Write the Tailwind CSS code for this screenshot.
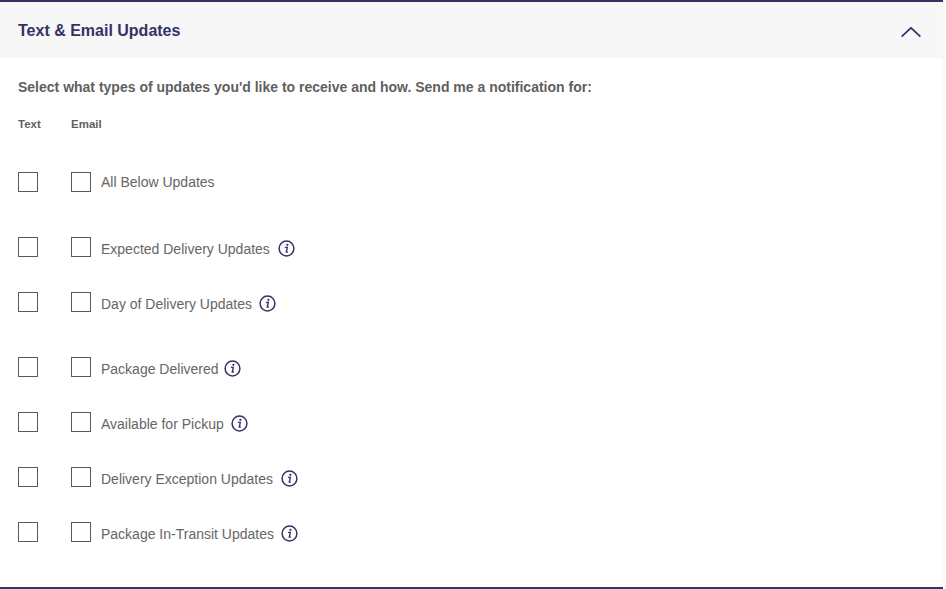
<!DOCTYPE html>
<html lang="en">
<head>
    <meta charset="UTF-8">
    <title>Text & Email Updates</title>
    <script src="https://cdn.jsdelivr.net/npm/@tailwindcss/browser@4"></script>
</head>
<body class="bg-[#f9f9f9] font-['Liberation_Sans',Arial,sans-serif] overflow-hidden">
    <section class="w-[943px] h-[589px] bg-white border-y-2 border-[#333366] flex flex-col">
        <div class="h-[56px] bg-[#f7f7f7] flex items-center justify-between pl-[18px] pr-[22px]">
            <h2 class="text-[16px] font-bold text-[#333366] leading-none mt-[2px]">Text &amp; Email Updates</h2>
            <svg class="w-[20px] h-[10px] mt-[4px]" viewBox="0 0 20 10" fill="none" stroke="#333366" stroke-width="1.8"><path d="M.6 9.6 10 .9l9.4 8.7"/></svg>
        </div>
        <div class="pl-[18px] pt-[21px]">
            <p class="text-[14px] font-bold text-[#5f5f5f] leading-[16px]">Select what types of updates you'd like to receive and how. Send me a notification for:</p>
            <div class="flex text-[11.5px] font-bold text-[#5f5f5f] leading-[14px] mt-[22px]">
                <span class="w-[53px]">Text</span>
                <span>Email</span>
            </div>

            <div class="mt-[41px] h-[65px]">
                <div class="flex">
                    <span class="w-[20px] h-[20px] border border-[#595959] mr-[33px]"></span>
                    <span class="w-[20px] h-[20px] border border-[#595959] mr-[10px]"></span>
                    <span class="text-[14px] text-[#666666] leading-[20px]">All Below Updates</span>
                </div>
            </div>

            <div class="h-[55px]">
                <div class="flex">
                    <span class="w-[20px] h-[20px] border border-[#595959] mr-[33px]"></span>
                    <span class="w-[20px] h-[20px] border border-[#595959] mr-[10px]"></span>
                    <span class="text-[14px] text-[#666666] leading-[20px] mt-[2px]">Expected Delivery Updates</span>
                    <svg class="w-[17px] h-[17px] ml-[8px] mt-[3px]" viewBox="0 0 17 17" fill="none"><circle cx="8.5" cy="8.5" r="7.4" stroke="#333366" stroke-width="1.5"/><circle cx="9.4" cy="4.8" r="1.15" fill="#333366"/><path d="M6.9 7.4h2.4l-1 4.7h1.6" stroke="#333366" stroke-width="1.4"/></svg>
                </div>
            </div>
            <div class="h-[65px]">
                <div class="flex">
                    <span class="w-[20px] h-[20px] border border-[#595959] mr-[33px]"></span>
                    <span class="w-[20px] h-[20px] border border-[#595959] mr-[10px]"></span>
                    <span class="text-[14px] text-[#666666] leading-[20px] mt-[2px]">Day of Delivery Updates</span>
                    <svg class="w-[17px] h-[17px] ml-[7px] mt-[3px]" viewBox="0 0 17 17" fill="none"><circle cx="8.5" cy="8.5" r="7.4" stroke="#333366" stroke-width="1.5"/><circle cx="9.4" cy="4.8" r="1.15" fill="#333366"/><path d="M6.9 7.4h2.4l-1 4.7h1.6" stroke="#333366" stroke-width="1.4"/></svg>
                </div>
            </div>

            <div class="h-[55px]">
                <div class="flex">
                    <span class="w-[20px] h-[20px] border border-[#595959] mr-[33px]"></span>
                    <span class="w-[20px] h-[20px] border border-[#595959] mr-[10px]"></span>
                    <span class="text-[14px] text-[#666666] leading-[20px] mt-[2px]">Package Delivered</span>
                    <svg class="w-[17px] h-[17px] ml-[5px] mt-[3px]" viewBox="0 0 17 17" fill="none"><circle cx="8.5" cy="8.5" r="7.4" stroke="#333366" stroke-width="1.5"/><circle cx="9.4" cy="4.8" r="1.15" fill="#333366"/><path d="M6.9 7.4h2.4l-1 4.7h1.6" stroke="#333366" stroke-width="1.4"/></svg>
                </div>
            </div>
            <div class="h-[55px]">
                <div class="flex">
                    <span class="w-[20px] h-[20px] border border-[#595959] mr-[33px]"></span>
                    <span class="w-[20px] h-[20px] border border-[#595959] mr-[10px]"></span>
                    <span class="text-[14px] text-[#666666] leading-[20px] mt-[2px]">Available for Pickup</span>
                    <svg class="w-[17px] h-[17px] ml-[7px] mt-[3px]" viewBox="0 0 17 17" fill="none"><circle cx="8.5" cy="8.5" r="7.4" stroke="#333366" stroke-width="1.5"/><circle cx="9.4" cy="4.8" r="1.15" fill="#333366"/><path d="M6.9 7.4h2.4l-1 4.7h1.6" stroke="#333366" stroke-width="1.4"/></svg>
                </div>
            </div>
            <div class="h-[55px]">
                <div class="flex">
                    <span class="w-[20px] h-[20px] border border-[#595959] mr-[33px]"></span>
                    <span class="w-[20px] h-[20px] border border-[#595959] mr-[10px]"></span>
                    <span class="text-[14px] text-[#666666] leading-[20px] mt-[2px]">Delivery Exception Updates</span>
                    <svg class="w-[17px] h-[17px] ml-[8px] mt-[3px]" viewBox="0 0 17 17" fill="none"><circle cx="8.5" cy="8.5" r="7.4" stroke="#333366" stroke-width="1.5"/><circle cx="9.4" cy="4.8" r="1.15" fill="#333366"/><path d="M6.9 7.4h2.4l-1 4.7h1.6" stroke="#333366" stroke-width="1.4"/></svg>
                </div>
            </div>
            <div class="h-[55px]">
                <div class="flex">
                    <span class="w-[20px] h-[20px] border border-[#595959] mr-[33px]"></span>
                    <span class="w-[20px] h-[20px] border border-[#595959] mr-[10px]"></span>
                    <span class="text-[14px] text-[#666666] leading-[20px] mt-[2px]">Package In-Transit Updates</span>
                    <svg class="w-[17px] h-[17px] ml-[7px] mt-[3px]" viewBox="0 0 17 17" fill="none"><circle cx="8.5" cy="8.5" r="7.4" stroke="#333366" stroke-width="1.5"/><circle cx="9.4" cy="4.8" r="1.15" fill="#333366"/><path d="M6.9 7.4h2.4l-1 4.7h1.6" stroke="#333366" stroke-width="1.4"/></svg>
                </div>
            </div>
        </div>
    </section>
</body>
</html>
